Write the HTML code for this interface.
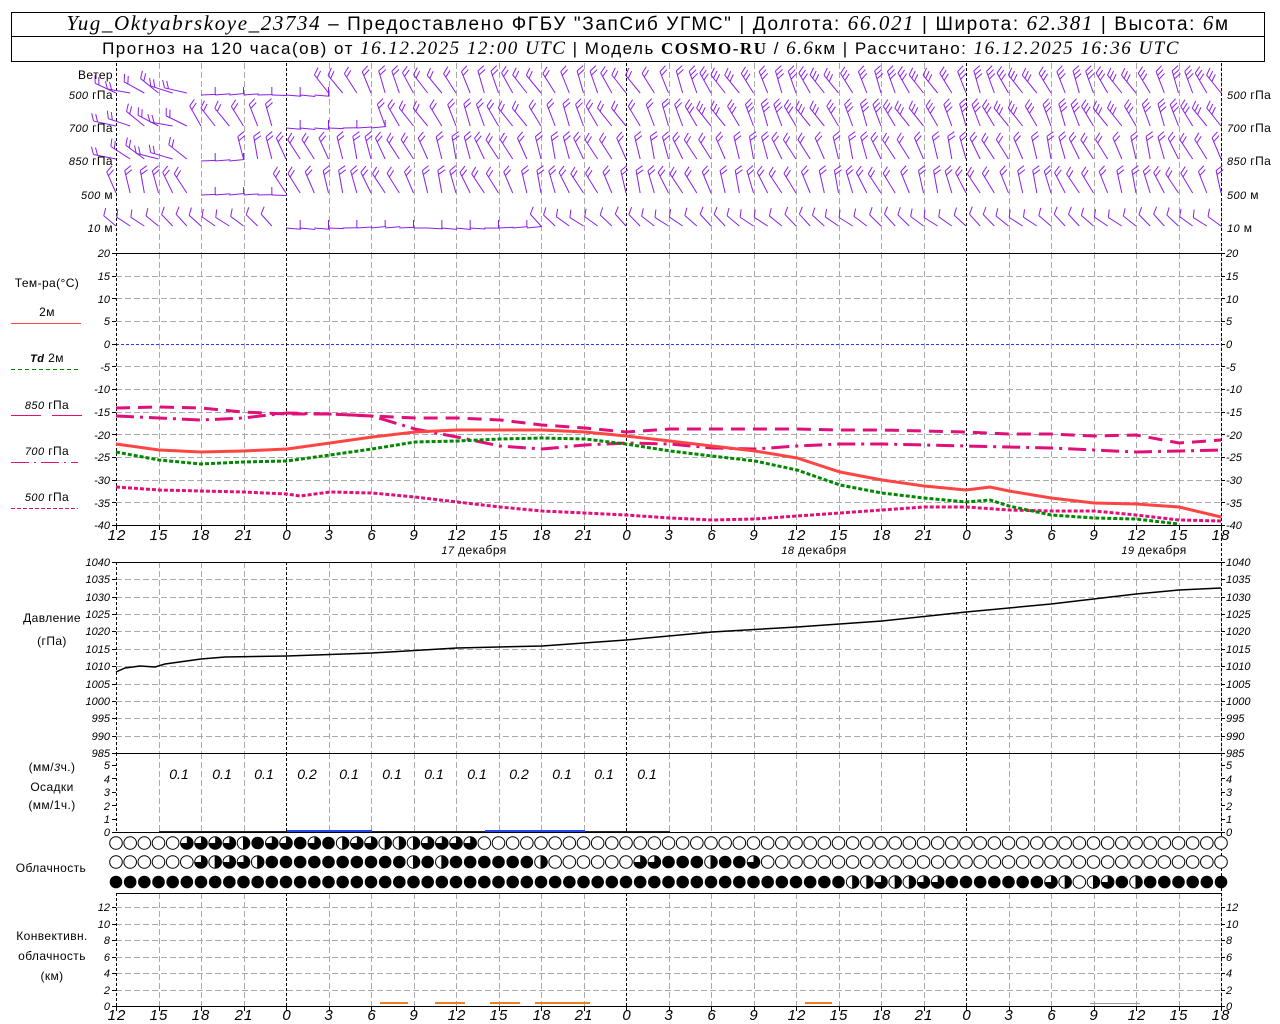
<!DOCTYPE html>
<html><head><meta charset="utf-8"><style>
html,body{margin:0;padding:0;background:#fff;}
svg{display:block;}
text{font-family:"Liberation Sans",sans-serif;fill:#000;}
.ax{font-size:11px;font-style:italic;}
.lb{font-size:12px;letter-spacing:0.4px;}
.it{font-family:"Liberation Serif",serif;font-style:italic;}
</style></head><body>
<svg id="s" width="1280" height="1024" viewBox="0 0 1280 1024" xmlns="http://www.w3.org/2000/svg">
<rect x="0" y="0" width="1280" height="1024" fill="#fff"/>
<rect x="11.5" y="12.5" width="1253" height="49" fill="none" stroke="#000"/>
<line x1="11" y1="36.5" x2="1265" y2="36.5" stroke="#000"/>
<text x="648" y="30" text-anchor="middle" font-size="19" letter-spacing="1.6"><tspan class="it" font-size="21">Yug_Oktyabrskoye_23734</tspan> – Предоставлено ФГБУ "ЗапСиб УГМС" | Долгота: <tspan class="it" font-size="21">66.021</tspan> | Широта: <tspan class="it" font-size="21">62.381</tspan> | Высота: <tspan class="it" font-size="21">6</tspan>м</text>
<text x="641" y="54" text-anchor="middle" font-size="17" letter-spacing="1.5">Прогноз на 120 часа(ов) от <tspan class="it" font-size="19">16.12.2025 12:00 UTC</tspan>  | Модель <tspan font-family="Liberation Serif" font-weight="bold">COSMO-RU</tspan> / <tspan class="it" font-size="19">6.6</tspan>км | Рассчитано: <tspan class="it" font-size="19">16.12.2025 16:36 UTC</tspan></text>

<g id="grid"></g>
<g id="curves"></g>
<g id="barbs" stroke="#8b1fe8" stroke-width="1" fill="none"></g>
<g id="clouds"></g>

<g class="lb">
<text x="113" y="79" text-anchor="end">Ветер</text>
<text x="113" y="99" text-anchor="end"><tspan class="ax">500</tspan> гПа</text>
<text x="113" y="132" text-anchor="end"><tspan class="ax">700</tspan> гПа</text>
<text x="113" y="165" text-anchor="end"><tspan class="ax">850</tspan> гПа</text>
<text x="113" y="199" text-anchor="end"><tspan class="ax">500</tspan> м</text>
<text x="113" y="232" text-anchor="end"><tspan class="ax">10</tspan>   м</text>
<text x="1227" y="99"><tspan class="ax">500</tspan> гПа</text>
<text x="1227" y="132"><tspan class="ax">700</tspan> гПа</text>
<text x="1227" y="165"><tspan class="ax">850</tspan> гПа</text>
<text x="1227" y="199"><tspan class="ax">500</tspan> м</text>
<text x="1227" y="232"><tspan class="ax">10</tspan>   м</text>
</g>
<g class="lb" text-anchor="middle">
<text x="47" y="287">Тем-ра(°С)</text>
<text x="47" y="316">2м</text>
<text x="47" y="362"><tspan class="ax" font-weight="bold">Td</tspan>  2м</text>
<text x="47" y="409"><tspan class="ax">850</tspan> гПа</text>
<text x="47" y="455"><tspan class="ax">700</tspan> гПа</text>
<text x="47" y="501"><tspan class="ax">500</tspan> гПа</text>
<text x="52" y="622">Давление</text>
<text x="52" y="645">(гПа)</text>
<text x="52" y="771">(мм/<tspan class="ax">3</tspan>ч.)</text>
<text x="52" y="791">Осадки</text>
<text x="52" y="809">(мм/1ч.)</text>
<text x="51" y="872">Облачность</text>
<text x="52" y="940">Конвективн.</text>
<text x="52" y="960">облачность</text>
<text x="52" y="980">(км)</text>
</g>
<line x1="11" y1="323.5" x2="81" y2="323.5" stroke="#f44" stroke-width="1"/>
<line x1="11" y1="369.5" x2="78" y2="369.5" stroke="#080" stroke-dasharray="4,3"/>
<line x1="11" y1="415.5" x2="41" y2="415.5" stroke="#e0107a"/><line x1="52" y1="415.5" x2="82" y2="415.5" stroke="#e0107a"/>
<line x1="11" y1="462.5" x2="78" y2="462.5" stroke="#e0107a" stroke-dasharray="18,5,2,5"/>
<line x1="11" y1="508.5" x2="78" y2="508.5" stroke="#e0107a" stroke-dasharray="4,2"/>

<text class="ax" x="110" y="257" text-anchor="end">20</text><text class="ax" x="1226" y="257">20</text>
<text class="ax" x="110" y="280" text-anchor="end">15</text><text class="ax" x="1226" y="280">15</text>
<text class="ax" x="110" y="303" text-anchor="end">10</text><text class="ax" x="1226" y="303">10</text>
<text class="ax" x="110" y="325" text-anchor="end">5</text><text class="ax" x="1226" y="325">5</text>
<text class="ax" x="110" y="348" text-anchor="end">0</text><text class="ax" x="1226" y="348">0</text>
<text class="ax" x="110" y="371" text-anchor="end">-5</text><text class="ax" x="1226" y="371">-5</text>
<text class="ax" x="110" y="393" text-anchor="end">-10</text><text class="ax" x="1226" y="393">-10</text>
<text class="ax" x="110" y="416" text-anchor="end">-15</text><text class="ax" x="1226" y="416">-15</text>
<text class="ax" x="110" y="439" text-anchor="end">-20</text><text class="ax" x="1226" y="439">-20</text>
<text class="ax" x="110" y="461" text-anchor="end">-25</text><text class="ax" x="1226" y="461">-25</text>
<text class="ax" x="110" y="484" text-anchor="end">-30</text><text class="ax" x="1226" y="484">-30</text>
<text class="ax" x="110" y="507" text-anchor="end">-35</text><text class="ax" x="1226" y="507">-35</text>
<text class="ax" x="110" y="529" text-anchor="end">-40</text><text class="ax" x="1226" y="529">-40</text>
<text class="ax" x="110" y="566" text-anchor="end">1040</text><text class="ax" x="1226" y="566">1040</text>
<text class="ax" x="110" y="583" text-anchor="end">1035</text><text class="ax" x="1226" y="583">1035</text>
<text class="ax" x="110" y="601" text-anchor="end">1030</text><text class="ax" x="1226" y="601">1030</text>
<text class="ax" x="110" y="618" text-anchor="end">1025</text><text class="ax" x="1226" y="618">1025</text>
<text class="ax" x="110" y="635" text-anchor="end">1020</text><text class="ax" x="1226" y="635">1020</text>
<text class="ax" x="110" y="653" text-anchor="end">1015</text><text class="ax" x="1226" y="653">1015</text>
<text class="ax" x="110" y="670" text-anchor="end">1010</text><text class="ax" x="1226" y="670">1010</text>
<text class="ax" x="110" y="688" text-anchor="end">1005</text><text class="ax" x="1226" y="688">1005</text>
<text class="ax" x="110" y="705" text-anchor="end">1000</text><text class="ax" x="1226" y="705">1000</text>
<text class="ax" x="110" y="722" text-anchor="end">995</text><text class="ax" x="1226" y="722">995</text>
<text class="ax" x="110" y="740" text-anchor="end">990</text><text class="ax" x="1226" y="740">990</text>
<text class="ax" x="110" y="757" text-anchor="end">985</text><text class="ax" x="1226" y="757">985</text>
<text class="ax" x="110" y="769" text-anchor="end">5</text><text class="ax" x="1226" y="769">5</text>
<text class="ax" x="110" y="783" text-anchor="end">4</text><text class="ax" x="1226" y="783">4</text>
<text class="ax" x="110" y="796" text-anchor="end">3</text><text class="ax" x="1226" y="796">3</text>
<text class="ax" x="110" y="810" text-anchor="end">2</text><text class="ax" x="1226" y="810">2</text>
<text class="ax" x="110" y="823" text-anchor="end">1</text><text class="ax" x="1226" y="823">1</text>
<text class="ax" x="110" y="836" text-anchor="end">0</text><text class="ax" x="1226" y="836">0</text>
<g font-size="14" class="it">
<text x="179" y="779" text-anchor="middle">0.1</text><text x="222" y="779" text-anchor="middle">0.1</text><text x="264" y="779" text-anchor="middle">0.1</text><text x="307" y="779" text-anchor="middle">0.2</text><text x="349" y="779" text-anchor="middle">0.1</text><text x="392" y="779" text-anchor="middle">0.1</text><text x="434" y="779" text-anchor="middle">0.1</text><text x="477" y="779" text-anchor="middle">0.1</text><text x="519" y="779" text-anchor="middle">0.2</text><text x="562" y="779" text-anchor="middle">0.1</text><text x="604" y="779" text-anchor="middle">0.1</text><text x="647" y="779" text-anchor="middle">0.1</text>
</g>
<text class="ax" x="110" y="911" text-anchor="end">12</text><text class="ax" x="1226" y="911">12</text>
<text class="ax" x="110" y="928" text-anchor="end">10</text><text class="ax" x="1226" y="928">10</text>
<text class="ax" x="110" y="944" text-anchor="end">8</text><text class="ax" x="1226" y="944">8</text>
<text class="ax" x="110" y="961" text-anchor="end">6</text><text class="ax" x="1226" y="961">6</text>
<text class="ax" x="110" y="977" text-anchor="end">4</text><text class="ax" x="1226" y="977">4</text>
<text class="ax" x="110" y="994" text-anchor="end">2</text><text class="ax" x="1226" y="994">2</text>
<text class="ax" x="110" y="1010" text-anchor="end">0</text><text class="ax" x="1226" y="1010">0</text>
<g font-size="15" class="it" text-anchor="middle" letter-spacing="1">
<text x="117" y="540">12</text><text x="159" y="540">15</text><text x="201" y="540">18</text><text x="244" y="540">21</text><text x="287" y="540">0</text><text x="329" y="540">3</text><text x="372" y="540">6</text><text x="414" y="540">9</text><text x="457" y="540">12</text><text x="499" y="540">15</text><text x="542" y="540">18</text><text x="584" y="540">21</text><text x="627" y="540">0</text><text x="669" y="540">3</text><text x="712" y="540">6</text><text x="754" y="540">9</text><text x="797" y="540">12</text><text x="839" y="540">15</text><text x="882" y="540">18</text><text x="924" y="540">21</text><text x="967" y="540">0</text><text x="1009" y="540">3</text><text x="1052" y="540">6</text><text x="1094" y="540">9</text><text x="1137" y="540">12</text><text x="1179" y="540">15</text><text x="1221" y="540">18</text>
</g>
<g font-size="15" class="it" text-anchor="middle" letter-spacing="1">
<text x="117" y="1020">12</text><text x="159" y="1020">15</text><text x="201" y="1020">18</text><text x="244" y="1020">21</text><text x="287" y="1020">0</text><text x="329" y="1020">3</text><text x="372" y="1020">6</text><text x="414" y="1020">9</text><text x="457" y="1020">12</text><text x="499" y="1020">15</text><text x="542" y="1020">18</text><text x="584" y="1020">21</text><text x="627" y="1020">0</text><text x="669" y="1020">3</text><text x="712" y="1020">6</text><text x="754" y="1020">9</text><text x="797" y="1020">12</text><text x="839" y="1020">15</text><text x="882" y="1020">18</text><text x="924" y="1020">21</text><text x="967" y="1020">0</text><text x="1009" y="1020">3</text><text x="1052" y="1020">6</text><text x="1094" y="1020">9</text><text x="1137" y="1020">12</text><text x="1179" y="1020">15</text><text x="1221" y="1020">18</text>
</g>
<g class="lb" text-anchor="middle" letter-spacing="1">
<text x="474" y="554"><tspan class="ax" font-size="13">17</tspan> декабря</text>
<text x="814" y="554"><tspan class="ax" font-size="13">18</tspan> декабря</text>
<text x="1154" y="554"><tspan class="ax" font-size="13">19</tspan> декабря</text>
</g>
</svg>
<script>
(function(){
var NS="http://www.w3.org/2000/svg";
function el(p,t,a){var e=document.createElementNS(NS,t);for(var k in a)e.setAttribute(k,a[k]);p.appendChild(e);return e;}
var g=document.getElementById('grid'),cu=document.getElementById('curves'),b=document.getElementById('barbs'),cl=document.getElementById('clouds');
var L=116,R=1221,st=(R-L)/26;
var panels=[[63,253],[253,525],[562,753],[753,832],[893,1006]];
function hl(y,c,d){el(g,'line',{x1:L,x2:R,y1:y+.5,y2:y+.5,stroke:c,'stroke-dasharray':d||''});}
for(var i=1;i<12;i++){var y=Math.round(253+i*272/12);hl(y,i==4?'#33f':'#aaa',i==4?'3,2':'6,3');}
for(var i=1;i<11;i++)hl(Math.round(562+i*191/11),'#aaa','6,3');
for(var i=1;i<6;i++)hl(Math.round(907+(i-1)*16.5),'#aaa','6,3');
hl(990,'#aaa','6,3');
for(var k=0;k<=26;k++){var x=Math.round(L+k*st)+.5;var mid=(k==4||k==12||k==20||k==0);
 panels.forEach(function(p){el(g,'line',{x1:x,x2:x,y1:p[0],y2:p[1],stroke:mid?'#000':'#aaa','stroke-dasharray':mid?'3,2':'6,3'});});
 [[525,530],[1006,1011]].forEach(function(p){el(g,'line',{x1:x,x2:x,y1:p[0],y2:p[1],stroke:'#000'});});
}
el(g,'line',{x1:R+.5,x2:R+.5,y1:63,y2:1006,stroke:'#000','stroke-dasharray':'3,2'});
[253,525,562,753,832,893,1006].forEach(function(y){el(g,'line',{x1:L,x2:R,y1:y+.5,y2:y+.5,stroke:'#000'});});
function ticks(y0,y1,n){for(var i=0;i<=n;i++){var y=Math.round(y0+i*(y1-y0)/n)+.5;el(g,'line',{x1:L-4,x2:L,y1:y,y2:y,stroke:'#000'});el(g,'line',{x1:R,x2:R+4,y1:y,y2:y,stroke:'#000'});}}
ticks(253,525,12);ticks(562,753,11);ticks(765,832,5);ticks(907,1006,6);
function pl(pts,c,w,d){el(cu,'polyline',{points:pts.map(function(p){return p.join(',')}).join(' '),fill:'none',stroke:c,'stroke-width':w,'stroke-dasharray':d||''});}
pl([[116,408],[159,407],[201,408],[243,412],[287,414],[330,414],[372,416],[415,418],[457,418],[500,420],[542,425],[585,428],[626,432],[670,429],[712,429],[755,429],[797,429],[840,430],[882,430],[924,431],[966,432],[1009,434],[1051,434],[1094,436],[1136,435],[1179,443],[1221,440]],'#e0107a',3,'14,8');
pl([[116,416],[159,418],[201,420],[243,418],[287,413],[330,414],[372,416],[415,429],[457,437],[500,446],[542,449],[585,445],[626,443],[670,444],[712,448],[755,449],[797,446],[840,444],[882,444],[924,445],[966,446],[1009,447],[1051,448],[1094,450],[1136,452],[1179,451],[1221,450]],'#e0107a',3,'18,6,3,6');
pl([[116,487],[159,490],[201,491],[243,492],[287,494],[300,496],[330,492],[372,493],[415,497],[457,502],[500,507],[542,511],[585,513],[626,515],[670,518],[712,520],[755,519],[797,516],[840,513],[882,510],[924,507],[966,507],[1009,510],[1051,511],[1094,511],[1136,515],[1179,520],[1221,521]],'#e0107a',3,'4,2');
pl([[116,452],[159,460],[201,464],[243,462],[287,461],[330,455],[372,449],[415,442],[457,441],[500,439],[542,438],[585,439],[626,444],[670,451],[712,456],[755,461],[797,470],[840,485],[882,493],[924,498],[966,502],[990,500],[1009,506],[1051,515],[1094,518],[1136,519],[1179,524]],'#080',3,'4,2');
pl([[116,444],[159,450],[201,452],[243,451],[287,449],[330,443],[372,437],[415,432],[457,430],[500,430],[542,430],[585,432],[626,436],[670,441],[712,446],[755,451],[797,458],[840,472],[882,480],[924,486],[966,490],[990,487],[1009,491],[1051,498],[1094,503],[1136,504],[1179,507],[1221,517]],'#f44',3);
pl([[116,672],[125,668],[140,666],[155,667],[165,664],[201,659],[225,657],[287,656],[372,653],[457,648],[542,646],[626,640],[712,632],[797,627],[882,621],[966,612],[1051,604],[1136,594],[1179,590],[1221,588]],'#000',1.5);
[[159,287,1],[287,372,2],[372,485,1],[485,585,2],[585,670,1]].forEach(function(r){el(cu,'rect',{x:r[0],y:832-r[2],width:r[1]-r[0],height:r[2],fill:r[2]>1?'#2244ee':'#223'});});
[[380,408],[435,465],[490,520],[535,590],[805,832]].forEach(function(r){el(cu,'rect',{x:r[0],y:1002,width:r[1]-r[0],height:2,fill:'#f07f20'});});
el(cu,'rect',{x:1090,y:1003,width:50,height:1,fill:'#999'});
// wind barbs
var rows=[93,126,159,193,226],hs=st/3;
var calmR=[[6,15],[12,19],[6,9],[6,12],[12,30]];
for(var r=0;r<5;r++)for(var i=0;i<79;i++){
 var x=L+i*hs,y=rows[r];
 var calm=(i>=calmR[r][0]&&i<calmR[r][1]);
 if(calm){
  var dy=Math.sin(i*0.6)*1.5;
  el(b,'line',{x1:x,y1:y+2,x2:x+hs+1,y2:y+2+dy});
  if(i%2==0) el(b,'line',{x1:x+hs,y1:y+2+dy,x2:x+hs,y2:y-6});
  continue;
 }
 var len=(r==4)?16:23;
 var deg;
 if(i<6&&r<3) deg=155+Math.sin(i*1.7+r)*15;
 else if(r==4) deg=140+Math.sin(i)*8;
 else deg=(r<2?118:112)+Math.sin(i*0.9+r)*12;
 var a=deg*Math.PI/180;
 var ex=x+Math.cos(a)*len, ey=y-Math.sin(a)*len;
 el(b,'line',{x1:x,y1:y,x2:ex,y2:ey});
 var nf=(r<2&&i>40)?3:(r==4?1:2);
 for(var f=0;f<nf;f++){var t=1-f*0.18;var px=x+(ex-x)*t,py=y+(ey-y)*t;
  var fa=a-Math.PI/2.8;
  el(b,'line',{x1:px,y1:py,x2:px+Math.cos(fa)*8,y2:py-Math.sin(fa)*8});}
}
var r1='OOOOOTTTTHFTTFTFHTTHHHTTTTOOOOOOOOOOOOOOOOOOOOOOOOOOOOOOOOOOOOOOOOOOOOOOOOOOO';
var r2='OOOOOOTHTTHFFFFFFFFFFHFHFFFFFFHOOOOOOTTFFFHFFTOOOOOOOOOOOOOOOOOOOOOOOOOOOOOOOOOO';
var r3='FFFFFFFFFFFFFFFFFFFFFFFFFFFFFFFFFFFFFFFFFFFFFFFFFFFFHHTHHTTFFFFFFFTHOHTFHFFFFFFH';
[[843,r1],[862,r2],[882,r3]].forEach(function(rw){var y=rw[0],s=rw[1];
 for(var i=0;i<79;i++){var x=L+i*hs,c=s[i]||'O';var rr=6.3;
  if(c=='F'){el(cl,'circle',{cx:x,cy:y,r:rr,fill:'#000'});continue;}
  el(cl,'circle',{cx:x,cy:y,r:rr,fill:'#fff',stroke:'#000'});
  if(c=='H'){el(cl,'path',{d:'M'+x+','+(y-rr)+'A'+rr+','+rr+' 0 0 1 '+x+','+(y+rr)+'Z',fill:'#000'});el(cl,'line',{x1:x,x2:x,y1:y-rr,y2:y+rr,stroke:'#000'});}
  if(c=='T'){el(cl,'path',{d:'M'+x+','+y+'L'+x+','+(y-rr)+'A'+rr+','+rr+' 0 1 1 '+(x-rr)+','+y+'Z',fill:'#000'});}
 }});
})();
</script>
</body></html>
